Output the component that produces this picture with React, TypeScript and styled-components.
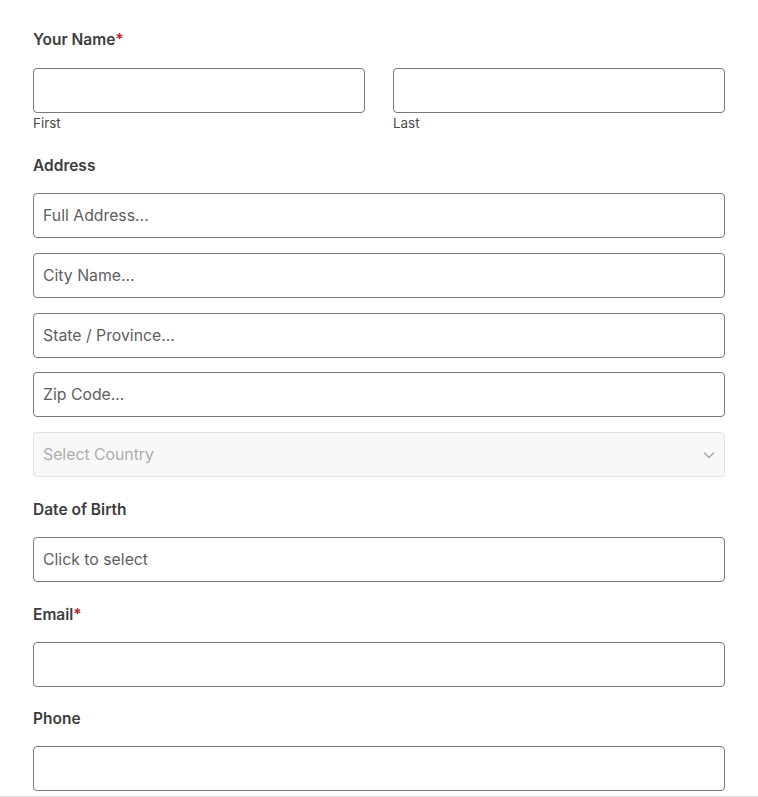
import React from "react";
import styled, { createGlobalStyle } from "styled-components";

const Global = createGlobalStyle`
  html, body { margin: 0; padding: 0; background: #fff; }
  body { font-family: Inter, "Noto Sans", "Liberation Sans", sans-serif; color: #333; overflow: hidden; }
  * { box-sizing: border-box; }
`;

const Form = styled.form`
  padding: 29px 33px 0 33px;
  display: flex;
  flex-direction: column;
`;

const Field = styled.div<{ $mb?: number }>`
  display: flex;
  flex-direction: column;
  margin-bottom: ${(p) => p.$mb ?? 21.5}px;
`;

const Label = styled.div`
  font-size: 15.5px;
  line-height: 20px;
  padding-top: 1px;
  font-weight: 600;
  color: #3d3d3d;
  margin-bottom: 17.5px;
`;

const Req = styled.span`
  color: #b3262b;
`;

const NameRow = styled.div`
  display: grid;
  grid-template-columns: 1fr 1fr;
  column-gap: 28px;
`;

const NameCol = styled.div`
  display: flex;
  flex-direction: column;
`;

const SubLabel = styled.div`
  font-size: 13.4px;
  line-height: 18px;
  color: #4a4a4a;
  margin-top: 1px;
`;

const Stack = styled.div`
  display: flex;
  flex-direction: column;
  gap: 14.75px;
`;

const Input = styled.div`
  height: 45px;
  border: 1px solid #7a7a7a;
  border-radius: 4px;
  background: #fff;
  padding: 0 9px;
  display: flex;
  align-items: center;
  font-size: 15.8px;
  color: #606060;
`;

const Select = styled.div`
  height: 45px;
  border: 1px solid #e3e3e3;
  border-radius: 4px;
  background: #f8f8f8;
  padding: 0 9px;
  display: flex;
  align-items: center;
  justify-content: space-between;
  font-size: 15.8px;
  color: #adadad;
`;

const Rule = styled.div`
  height: 1px;
  background: #dcdcdc;
  margin: 5px -33px 0;
`;

const Chevron = () => (
  <svg width="12" height="8" viewBox="0 0 12 8">
    <path d="M1 1.5 L6 6.5 L11 1.5" fill="none" stroke="#a8a8a8" strokeWidth="1.4" />
  </svg>
);

export default function App() {
  return (
    <>
      <Global />
      <Form>
        <Field $mb={23}>
          <Label>
            Your Name<Req>*</Req>
          </Label>
          <NameRow>
            <NameCol>
              <Input />
              <SubLabel>First</SubLabel>
            </NameCol>
            <NameCol>
              <Input />
              <SubLabel>Last</SubLabel>
            </NameCol>
          </NameRow>
        </Field>
        <Field>
          <Label>Address</Label>
          <Stack>
            <Input>Full Address...</Input>
            <Input>City Name...</Input>
            <Input>State / Province...</Input>
            <Input>Zip Code...</Input>
            <Select>
              <span>Select Country</span>
              <Chevron />
            </Select>
          </Stack>
        </Field>
        <Field>
          <Label>Date of Birth</Label>
          <Input>Click to select</Input>
        </Field>
        <Field $mb={20.5}>
          <Label>
            Email<Req>*</Req>
          </Label>
          <Input />
        </Field>
        <Field $mb={0}>
          <Label>Phone</Label>
          <Input />
        </Field>
        <Rule />
      </Form>
    </>
  );
}
